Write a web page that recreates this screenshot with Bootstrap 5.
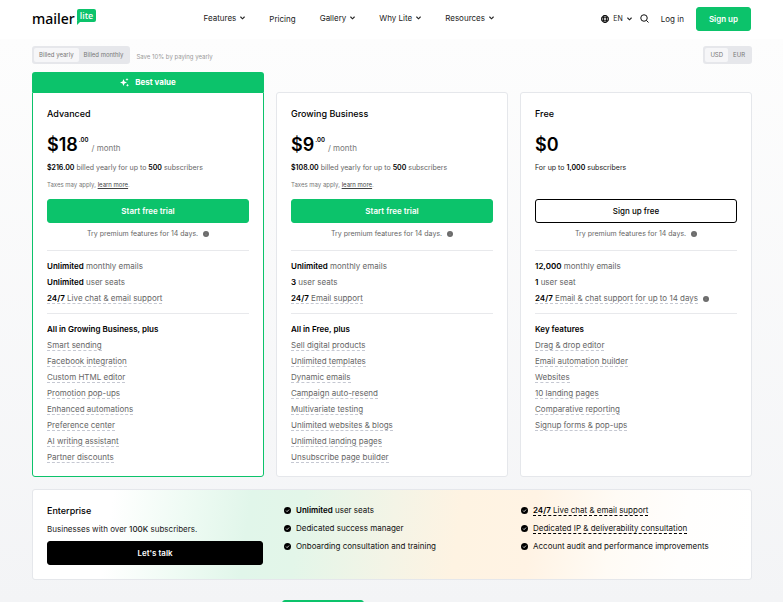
<!DOCTYPE html>
<html lang="en">
<head>
<meta charset="utf-8">
<meta name="viewport" content="width=device-width, initial-scale=1">
<title>MailerLite Pricing</title>
<link href="https://cdn.jsdelivr.net/npm/bootstrap@5.3.0/dist/css/bootstrap.min.css" rel="stylesheet">
<style>
:root { --brand: #0cc36b; --line: #e5e7eb; }
body { font-family: Inter, "Liberation Sans", sans-serif; font-size: 8px; line-height: 16px; color: #000; background: #f3f4f6; }
.page { height: 100vh; overflow: hidden; background: linear-gradient(#fdfdfd 39px, #f3f4f6); }
.gutter { padding-left: 32px; padding-right: 32px; }
main.gutter { padding-right: 31px; }
.site-header { height: 39px; padding-bottom: 2px; background: #fff; }
.logo-word { font: 500 14px/18px "Noto Sans", sans-serif; color: #000; }
.logo-tag { position: relative; margin: 0 0 6px 2px; padding: 0 3px; height: 13px; border-radius: 2px; background: var(--brand); color: #fff; font: 500 9px/13px "Noto Sans", sans-serif; }
.logo-tag::after { content: ""; position: absolute; left: 0; bottom: -3px; border-top: 4px solid var(--brand); border-right: 4px solid transparent; }
.main-nav { gap: 24px; padding-bottom: 2px; }
.main-nav a, .tools a { color: #222; text-decoration: none; }
.main-nav a { display: flex; align-items: center; gap: 4px; }
.main-nav .flat { padding-top: 2px; }
.chev { width: 5px; height: 4px; fill: none; stroke: currentColor; stroke-width: 1.1; stroke-linecap: round; }
.btn { --bs-btn-font-size: 8px; --bs-btn-line-height: 14px; --bs-btn-padding-y: 4px; --bs-btn-border-radius: 3px; --bs-btn-font-weight: 600; width: 100%; }
.btn-brand { --bs-btn-color: #fff; --bs-btn-bg: var(--brand); --bs-btn-border-color: var(--brand); --bs-btn-hover-color: #fff; --bs-btn-hover-bg: #0aad5e; }
.btn-line { --bs-btn-color: #000; --bs-btn-bg: #fff; --bs-btn-border-color: #000; --bs-btn-font-weight: 500; }
.btn-ink { --bs-btn-color: #fff; --bs-btn-bg: #000; --bs-btn-border-color: #000; --bs-btn-hover-color: #fff; --bs-btn-hover-bg: #222; }
.btn-join { width: auto; --bs-btn-padding-x: 12px; }
.lang { gap: 4px; border: 0; padding: 0; background: none; color: #222; font-size: 7px; }
.switches { padding-top: 7px; padding-bottom: 8px; }
.switch { display: flex; padding: 2px; border-radius: 3px; background: #e6e7eb; }
.switch button { border: 0; border-radius: 2px; background: none; color: #777; font-size: 6px; line-height: 14px; padding: 0 5px; }
.switch button.on { background: #f6f6f8; }
.hint { font-size: 6px; line-height: 12px; color: #999; margin: 5px 0 0 6px; }
.plans { display: grid; grid-template-columns: repeat(3, 1fr); gap: 12px; }
.plan { display: flex; flex-direction: column; padding-top: 20px; }
.plan-best { padding-top: 0; }
.ribbon { height: 20px; display: flex; align-items: center; justify-content: center; gap: 6px; background: var(--brand); color: #fff; font-weight: 700; border-radius: 3px 3px 0 0; }
.plan-box { flex: 1; background: #fff; border: 1px solid var(--line); border-radius: 3px; padding: 14px 14px 11px; }
.plan-best .plan-box { border-color: var(--brand); border-radius: 0 0 3px 3px; }
.intro { min-height: 84px; }
h2 { font-size: 9px; line-height: 14px; font-weight: 500; margin: 0; }
.price { display: flex; height: 24px; margin-top: 12px; line-height: 24px; }
.price b { font-size: 18px; font-weight: 600; }
.cents { font-size: 6px; line-height: 12px; font-weight: 600; margin: 1px 3px 0 1px; }
.per { color: #777; padding-top: 3px; }
.bill { font-size: 7px; line-height: 14px; margin: 4px 0; color: #666; }
.bill b, .feats b { font-weight: 600; color: #000; }
.bill.dark { color: #222; }
.tax { font-size: 6px; line-height: 12px; margin: 0; color: #777; }
.tax a { color: #444; }
.act { margin-top: 8px; }
.trial { font-size: 7px; line-height: 14px; color: #666; margin: 4px 0 0; text-align: center; }
.dot { width: 6px; height: 6px; margin-left: 3px; vertical-align: -1px; }
hr { margin: 9px 0 7px; border-color: #e8e9ec; opacity: 1; }
.feats + hr { margin-top: 7px; }
.feats { list-style: none; margin: 0; padding: 0; color: #666; }
.feats a { color: inherit; text-decoration: none; border-bottom: 1px dashed #c5c8d2; }
.enterprise { display: grid; grid-template-columns: repeat(3, 1fr); gap: 21px; margin-top: 12px; padding: 14px; border: 1px solid var(--line); border-radius: 3px; background: linear-gradient(98deg, #fff 0%, #fff 11%, #effbf4 21%, #e1f6ea 30%, #e3f6e9 37%, #f4f4e6 50%, #fef3e2 59%, #fff3e4 69%, #fffbf5 80%, #fffefd 90%, #fff 100%); }
.enterprise .sub { margin: 4px 0 5px; line-height: 14px; color: #222; }
.enterprise .sub b { font-weight: 500; }
.checks { margin-top: -3px; color: #111; line-height: 18px; }
.checks a { border-color: #000; }
.check { width: 7px; height: 7px; margin-right: 5px; vertical-align: -1px; }
.compare { width: 82px; margin: 20px auto 0 250px; }
</style>
<script src="https://cdn.jsdelivr.net/npm/bootstrap@5.3.0/dist/js/bootstrap.bundle.min.js"></script>
</head>
<body>
<svg class="d-none">
  <symbol id="chev" viewBox="0 0 5 4"><path d="M.7 1l1.8 1.8L4.3 1"/></symbol>
  <symbol id="dot" viewBox="0 0 12 12"><circle cx="6" cy="6" r="6" fill="#6b6b6b"/><path d="M6 5.4v3.4M6 3v1.2" stroke="#999" stroke-width="1.2"/></symbol>
  <symbol id="check" viewBox="0 0 14 14"><circle cx="7" cy="7" r="7"/><path d="M4.2 7.2l2 2 3.8-4" fill="none" stroke="#fff" stroke-width="1.6"/></symbol>
</svg>
<div class="page">
  <header class="site-header gutter d-flex align-items-center justify-content-between">
    <a href="#" class="d-flex align-items-center text-decoration-none" aria-label="MailerLite"><span class="logo-word">mailer</span><span class="logo-tag">lite</span></a>
    <nav class="main-nav d-flex align-items-center">
      <a href="#">Features <svg class="chev"><use href="#chev"/></svg></a>
      <a href="#" class="flat">Pricing</a>
      <a href="#">Gallery <svg class="chev"><use href="#chev"/></svg></a>
      <a href="#">Why Lite <svg class="chev"><use href="#chev"/></svg></a>
      <a href="#">Resources <svg class="chev"><use href="#chev"/></svg></a>
    </nav>
    <div class="tools d-flex align-items-center">
      <button type="button" class="lang d-flex align-items-center"><svg width="8" height="8" viewBox="0 0 16 16" fill="none" stroke="#111" stroke-width="2.1"><circle cx="8" cy="8" r="6.9"/><ellipse cx="8" cy="8" rx="3.4" ry="7"/><path d="M1.5 5.500h13M1.5 10.500h13"/></svg>EN <svg class="chev"><use href="#chev"/></svg></button>
      <a href="#" class="d-flex ms-2 me-1" aria-label="Search"><svg width="9" height="9" viewBox="0 0 18 18" fill="none" stroke="#111" stroke-width="2"><circle cx="8" cy="8" r="6.5"/><path d="M12.7 12.7L17 17"/></svg></a>
      <a href="#" class="ms-2 me-2">Log in</a>
      <a href="#" class="btn btn-brand btn-join ms-1 text-white">Sign up</a>
    </div>
  </header>

  <main class="gutter">
    <div class="switches d-flex">
      <div class="switch" role="group" aria-label="Billing period"><button type="button" class="on">Billed yearly</button><button type="button">Billed monthly</button></div>
      <span class="hint">Save 10% by paying yearly</span>
      <div class="switch ms-auto" role="group" aria-label="Currency"><button type="button" class="on">USD</button><button type="button">EUR</button></div>
    </div>

    <div class="plans">
      <section class="plan plan-best">
        <div class="ribbon"><svg width="9" height="9" viewBox="0 0 18 18" fill="#fff"><path d="M7 2l2 5 5 2-5 2-2 5-2-5-5-2 5-2zM14 0l.9 2.1L17 3l-2.1.9L14 6l-.9-2.1L11 3l2.1-.9zM15 11.500l.9 2.100 2.100.9-2.100.9-.9 2.100-.9-2.100-2.100-.9 2.100-.9z"/></svg>Best value</div>
        <div class="plan-box">
          <div class="intro">
            <h2>Advanced</h2>
            <div class="price"><b>$18</b><span class="cents">.00</span><span class="per">/ month</span></div>
            <p class="bill"><b>$216.00</b> billed yearly for up to <b>500</b> subscribers</p>
            <p class="tax">Taxes may apply, <a href="#">learn more</a>.</p>
          </div>
          <button type="button" class="btn btn-brand act">Start free trial</button>
          <p class="trial">Try premium features for 14 days. <svg class="dot"><use href="#dot"/></svg></p>
          <hr>
          <ul class="feats">
            <li><b>Unlimited</b> monthly emails</li>
            <li><b>Unlimited</b> user seats</li>
            <li><a href="#"><b>24/7</b> Live chat &amp; email support</a></li>
          </ul>
          <hr>
          <ul class="feats">
            <li><b>All in Growing Business, plus</b></li>
            <li><a href="#">Smart sending</a></li>
            <li><a href="#">Facebook integration</a></li>
            <li><a href="#">Custom HTML editor</a></li>
            <li><a href="#">Promotion pop-ups</a></li>
            <li><a href="#">Enhanced automations</a></li>
            <li><a href="#">Preference center</a></li>
            <li><a href="#">AI writing assistant</a></li>
            <li><a href="#">Partner discounts</a></li>
          </ul>
        </div>
      </section>

      <section class="plan">
        <div class="plan-box">
          <div class="intro">
            <h2>Growing Business</h2>
            <div class="price"><b>$9</b><span class="cents">.00</span><span class="per">/ month</span></div>
            <p class="bill"><b>$108.00</b> billed yearly for up to <b>500</b> subscribers</p>
            <p class="tax">Taxes may apply, <a href="#">learn more</a>.</p>
          </div>
          <button type="button" class="btn btn-brand act">Start free trial</button>
          <p class="trial">Try premium features for 14 days. <svg class="dot"><use href="#dot"/></svg></p>
          <hr>
          <ul class="feats">
            <li><b>Unlimited</b> monthly emails</li>
            <li><b>3</b> user seats</li>
            <li><a href="#"><b>24/7</b> Email support</a></li>
          </ul>
          <hr>
          <ul class="feats">
            <li><b>All in Free, plus</b></li>
            <li><a href="#">Sell digital products</a></li>
            <li><a href="#">Unlimited templates</a></li>
            <li><a href="#">Dynamic emails</a></li>
            <li><a href="#">Campaign auto-resend</a></li>
            <li><a href="#">Multivariate testing</a></li>
            <li><a href="#">Unlimited websites &amp; blogs</a></li>
            <li><a href="#">Unlimited landing pages</a></li>
            <li><a href="#">Unsubscribe page builder</a></li>
          </ul>
        </div>
      </section>

      <section class="plan">
        <div class="plan-box">
          <div class="intro">
            <h2>Free</h2>
            <div class="price"><b>$0</b></div>
            <p class="bill dark">For up to <b>1,000</b> subscribers</p>
          </div>
          <button type="button" class="btn btn-line act">Sign up free</button>
          <p class="trial">Try premium features for 14 days. <svg class="dot"><use href="#dot"/></svg></p>
          <hr>
          <ul class="feats">
            <li><b>12,000</b> monthly emails</li>
            <li><b>1</b> user seat</li>
            <li><a href="#"><b>24/7</b> Email &amp; chat support for up to 14 days</a> <svg class="dot"><use href="#dot"/></svg></li>
          </ul>
          <hr>
          <ul class="feats">
            <li><b>Key features</b></li>
            <li><a href="#">Drag &amp; drop editor</a></li>
            <li><a href="#">Email automation builder</a></li>
            <li><a href="#">Websites</a></li>
            <li><a href="#">10 landing pages</a></li>
            <li><a href="#">Comparative reporting</a></li>
            <li><a href="#">Signup forms &amp; pop-ups</a></li>
          </ul>
        </div>
      </section>
    </div>

    <section class="enterprise">
      <div>
        <h2>Enterprise</h2>
        <p class="sub">Businesses with over <b>100K</b> subscribers.</p>
        <button type="button" class="btn btn-ink">Let's talk</button>
      </div>
      <ul class="feats checks">
        <li><svg class="check"><use href="#check"/></svg><b>Unlimited</b> user seats</li>
        <li><svg class="check"><use href="#check"/></svg>Dedicated success manager</li>
        <li><svg class="check"><use href="#check"/></svg>Onboarding consultation and training</li>
      </ul>
      <ul class="feats checks">
        <li><svg class="check"><use href="#check"/></svg><a href="#"><b>24/7</b> Live chat &amp; email support</a></li>
        <li><svg class="check"><use href="#check"/></svg><a href="#">Dedicated IP &amp; deliverability consultation</a></li>
        <li><svg class="check"><use href="#check"/></svg>Account audit and performance improvements</li>
      </ul>
    </section>

    <div class="compare"><button type="button" class="btn btn-brand p-2" aria-label="Compare plans"></button></div>
  </main>
</div>
</body>
</html>
